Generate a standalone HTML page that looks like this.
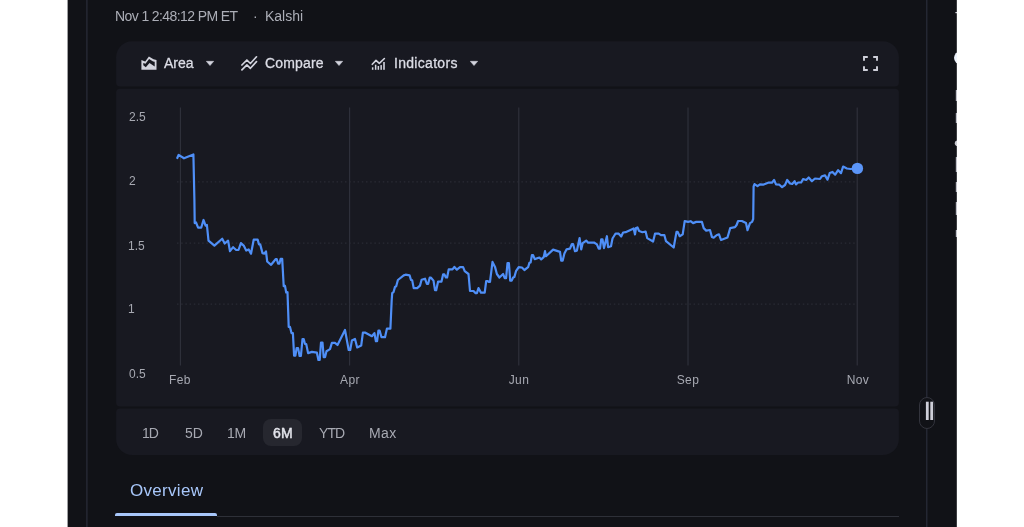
<!DOCTYPE html>
<html><head><meta charset="utf-8">
<style>
html,body{margin:0;padding:0;}
body{width:1024px;height:527px;overflow:hidden;background:#fff;position:relative;font-family:"Liberation Sans",sans-serif;}
.abs{position:absolute;}
.t{position:absolute;white-space:nowrap;line-height:1;will-change:transform;}
.hdr{font-size:14px;color:#acaeb7;top:9px;}
.tb{font-size:14px;color:#dcdde6;top:56px;-webkit-text-stroke:0.3px #dcdde6;}
.yl{font-size:12px;color:#a7a9b2;left:129px;}
.xl{font-size:12px;color:#a7a9b2;top:374px;transform:translateX(-50%);letter-spacing:0.4px;}
.rg{font-size:14px;color:#a7a9b2;top:425.5px;}
.ic{position:absolute;overflow:visible;}
</style></head><body>
<svg class="abs" style="left:0;top:0" width="1024" height="527" viewBox="0 0 1024 527">
<rect x="67.6" y="0" width="889.3" height="527" fill="#111217"/>
<line x1="86.9" y1="0" x2="86.9" y2="527" stroke="#2a2d3b" stroke-width="1.2"/>
<line x1="926.8" y1="0" x2="926.8" y2="527" stroke="#2a2d3b" stroke-width="1.2"/>
<path d="M132.1 41.2 H882.9 A16 16 0 0 1 898.9 57.2 V82.4 A4 4 0 0 1 894.9 86.4 H120.1 A4 4 0 0 1 116.1 82.4 V57.2 A16 16 0 0 1 132.1 41.2 Z" fill="#181921"/>
<path d="M120.1 88.8 H894.9 A4 4 0 0 1 898.9 92.8 V402.5 A4 4 0 0 1 894.9 406.5 H120.1 A4 4 0 0 1 116.1 402.5 V92.8 A4 4 0 0 1 120.1 88.8 Z" fill="#181921"/>
<path d="M120.1 408.6 H894.9 A4 4 0 0 1 898.9 412.6 V439 A16 16 0 0 1 882.9 455 H132.1 A16 16 0 0 1 116.1 439 V412.6 A4 4 0 0 1 120.1 408.6 Z" fill="#181921"/>
<circle cx="960.6" cy="57.8" r="6.6" fill="#eef3fc"/>
<rect x="955.4" y="12" width="1.6" height="1.2" fill="#d8d9e0"/>
<rect x="955.8" y="90" width="1.2" height="11" fill="#b9bac3"/>
<rect x="955.8" y="113" width="1.2" height="10" fill="#b9bac3"/>
<rect x="955.8" y="157" width="1.2" height="15" fill="#b9bac3"/>
<rect x="955.8" y="182" width="1.2" height="10" fill="#b9bac3"/>
<rect x="955.8" y="202" width="1.2" height="13" fill="#b9bac3"/>
<rect x="955.8" y="230" width="1.2" height="7" fill="#b9bac3"/>
<circle cx="957.6" cy="143.2" r="2.8" fill="#c9cad2"/>
<rect x="956.9" y="0" width="70" height="527" fill="#ffffff"/>
</svg>
<div class="t hdr" id="h1" style="left:115.1px;letter-spacing:-0.6px">Nov 1 2:48:12 PM ET</div>
<div class="t hdr" id="h2" style="left:253.4px">·</div>
<div class="t hdr" id="h3" style="left:265px">Kalshi</div>

<!-- Area icon -->
<svg class="ic" style="left:140px;top:55px" width="18" height="18" viewBox="0 0 18 18">
<path fill-rule="evenodd" fill="#d3d4de" d="M1.4 14.8 V5.0 L5.2 6.5 L8.9 1.4 L13.5 4.2 L16.5 5.0 V14.8 Z M3.3 7.9 L5.5 8.7 L9.1 4.1 L13.1 6.4 L14.7 6.7 V11.6 L9.5 7.9 L5.8 12.2 L3.3 10.2 Z"/>
</svg>
<!-- Compare icon -->
<svg class="ic" style="left:240px;top:55px" width="18" height="18" viewBox="0 0 18 18">
<path d="M1.9 10.0 L6.9 5.0 L10.4 8.5 L16.5 1.8" fill="none" stroke="#d3d4de" stroke-width="1.7" stroke-linejoin="round" stroke-linecap="round"/>
<path d="M1.9 14.8 L6.9 9.8 L10.4 13.3 L16.5 6.6" fill="none" stroke="#d3d4de" stroke-width="1.7" stroke-linejoin="round" stroke-linecap="round"/>
</svg>
<!-- Indicators icon -->
<svg class="ic" style="left:370px;top:55px" width="18" height="18" viewBox="0 0 18 18">
<path d="M2.3 9.3 L6.0 5.4 L9.3 8.4 L14.4 3.5" fill="none" stroke="#d3d4de" stroke-width="1.6" stroke-linejoin="round" stroke-linecap="round"/>
<rect x="1.9" y="12.3" width="1.5" height="2.5" fill="#d3d4de"/>
<rect x="4.9" y="9.7" width="1.5" height="5.1" fill="#d3d4de"/>
<rect x="7.6" y="11.0" width="1.5" height="3.8" fill="#d3d4de"/>
<rect x="10.4" y="10.1" width="1.5" height="4.7" fill="#d3d4de"/>
<rect x="13.2" y="7.0" width="1.6" height="7.8" fill="#d3d4de"/>
</svg>
<!-- dropdown arrows -->
<svg class="ic" style="left:206px;top:61px" width="8" height="5" viewBox="0 0 8 5"><path d="M0.3 0.3 H7.7 L4 4.6 Z" fill="#d3d4de" stroke="#d3d4de" stroke-width="0.5" stroke-linejoin="round"/></svg>
<svg class="ic" style="left:335px;top:61px" width="8" height="5" viewBox="0 0 8 5"><path d="M0.3 0.3 H7.7 L4 4.6 Z" fill="#d3d4de" stroke="#d3d4de" stroke-width="0.5" stroke-linejoin="round"/></svg>
<svg class="ic" style="left:470px;top:61px" width="8" height="5" viewBox="0 0 8 5"><path d="M0.3 0.3 H7.7 L4 4.6 Z" fill="#d3d4de" stroke="#d3d4de" stroke-width="0.5" stroke-linejoin="round"/></svg>
<!-- fullscreen icon -->
<svg class="ic" style="left:863px;top:56px" width="15" height="15" viewBox="0 0 15 15">
<path d="M1 4.8 V1 H4.8 M10.2 1 H14 V4.8 M14 10.2 V14 H10.2 M4.8 14 H1 V10.2" fill="none" stroke="#cfd0da" stroke-width="1.9"/>
</svg>

<div class="t tb" id="t1" style="left:164px">Area</div>
<div class="t tb" id="t2" style="left:264.5px;letter-spacing:0.15px">Compare</div>
<div class="t tb" id="t3" style="left:393.5px;letter-spacing:0.3px">Indicators</div>
<div class="t yl" style="top:111px">2.5</div>
<div class="t yl" style="top:175px">2</div>
<div class="t yl" style="top:239.5px;left:127.6px">1.5</div>
<div class="t yl" style="top:303.3px;left:127.6px">1</div>
<div class="t yl" style="top:368px">0.5</div>
<div class="t xl" style="left:180.2px">Feb</div>
<div class="t xl" style="left:349.7px">Apr</div>
<div class="t xl" style="left:519.3px">Jun</div>
<div class="t xl" style="left:688.4px">Sep</div>
<div class="t xl" style="left:858px">Nov</div>
<svg class="abs" style="left:0;top:0" width="1024" height="527" viewBox="0 0 1024 527">
<line x1="180.4" y1="107.5" x2="180.4" y2="365.5" stroke="#30323d" stroke-width="1.1"/>
<line x1="349.6" y1="107.5" x2="349.6" y2="365.5" stroke="#30323d" stroke-width="1.1"/>
<line x1="518.8" y1="107.5" x2="518.8" y2="365.5" stroke="#30323d" stroke-width="1.1"/>
<line x1="688.0" y1="107.5" x2="688.0" y2="365.5" stroke="#30323d" stroke-width="1.1"/>
<line x1="857.2" y1="107.5" x2="857.2" y2="365.5" stroke="#30323d" stroke-width="1.1"/>
<line x1="177" y1="181.9" x2="857" y2="181.9" stroke="#2e3039" stroke-width="1" stroke-dasharray="1.5 2.7"/>
<line x1="177" y1="243.1" x2="857" y2="243.1" stroke="#2e3039" stroke-width="1" stroke-dasharray="1.5 2.7"/>
<line x1="177" y1="304.1" x2="857" y2="304.1" stroke="#2e3039" stroke-width="1" stroke-dasharray="1.5 2.7"/>
<polyline points="177.3,158.0 178.6,154.9 184.0,158.3 193.4,154.5 194.4,200 194.7,223.1 196.0,222.5 198.1,227.7 201.2,227.7 203.5,220.0 205.6,225.6 206.9,225.0 208.5,240.6 214.4,245.6 222.2,238.7 224.7,243.5 228.1,240.6 230.0,251.2 233.1,247.2 236.2,250.0 238.5,250.0 240.9,243.1 243.7,245.6 246.2,250.6 248.7,249.4 251.0,253.7 253.7,239.7 257.7,239.7 259.0,244.4 260.2,244.4 262.5,253.1 264.4,253.7 266.0,251.5 267.2,261.5 271.1,264.8 275.6,259.2 276.8,259.2 278.1,263.7 279.4,263.7 280.6,258.9 282.2,258.9 283.7,286.2 285.0,285.9 286.2,292.5 287.5,292.2 288.2,312 288.7,326.9 290.0,326.9 291.5,333.1 292.9,333.1 294.1,355.6 295.4,355.6 296.6,348.1 298.1,348.1 299.6,356.0 300.9,356.0 302.5,339.0 303.7,339.0 305.0,344.0 306.2,344.0 308.1,353.1 311.9,351.9 316.9,352.7 318.4,360.0 319.7,360.0 321.0,342.5 322.5,342.5 323.7,357.2 325.0,357.2 326.5,351.2 330.0,349.1 331.9,342.9 335.0,342.9 337.5,345.0 345.0,330.0 348.7,350.0 350.2,350.0 351.9,340.6 355.0,339.0 357.2,347.5 361.2,345.6 362.9,332.7 365.0,332.5 371.9,336.2 374.4,333.1 375.9,341.2 377.1,341.2 378.4,330.6 379.6,330.6 381.5,337.2 385.0,337.2 386.9,328.7 390.4,328.7 391.7,300 392.2,293.1 393.5,292.2 395.0,286.9 396.2,286.2 397.9,280.0 403.7,275.4 405.6,274.7 409.6,275.4 411.0,280.0 412.2,280.4 413.7,288.1 417.2,288.1 420.0,285.6 421.6,279.7 425.0,278.7 426.9,284.0 428.1,284.0 429.7,277.7 431.0,277.7 433.5,280.6 435.0,290.2 436.2,290.2 438.1,281.6 441.5,281.6 443.1,274.4 444.4,274.4 445.9,277.5 447.1,277.5 448.7,269.4 452.5,269.4 454.4,266.9 456.9,269.7 460.0,267.2 463.1,267.2 464.7,271.2 468.5,274.0 470.0,291.0 473.5,291.0 475.6,293.1 476.9,293.1 478.5,288.1 481.0,292.7 484.7,292.7 486.2,281.0 487.5,281.0 488.7,281.9 490.0,281.9 492.5,261.9 495.0,266.9 496.9,274.0 499.4,277.5 503.1,274.0 504.7,278.1 506.1,278.1 507.5,263.1 508.9,263.1 510.2,280.6 511.7,280.6 513.1,277.5 514.4,276.9 516.0,271.2 518.7,267.2 521.9,267.5 524.4,270.0 528.1,267.2 529.4,262.9 530.6,262.5 531.9,255.2 533.1,255.2 534.7,259.1 539.4,257.5 541.2,259.4 543.7,257.2 545.0,251.2 546.0,256.2 553.1,249.6 560.0,251.9 561.2,260.6 562.7,260.6 564.4,253.5 566.5,249.4 570.0,248.7 571.9,244.0 573.1,244.0 575.0,251.2 576.9,250.6 579.6,238.1 581.2,249.4 582.7,243.1 586.2,240.6 588.1,242.7 594.0,242.5 596.9,244.4 598.7,248.7 600.0,248.7 601.2,239.4 602.5,239.4 604.0,248.1 606.9,236.2 608.1,247.2 611.0,246.2 612.5,238.5 615.6,233.5 618.7,233.7 621.2,236.5 623.1,232.5 625.6,232.2 633.7,228.5 635.0,234.4 636.0,228.1 637.5,227.5 639.1,231.0 642.5,232.2 645.6,231.5 647.2,238.1 653.1,241.5 655.0,233.7 658.7,233.7 661.0,235.2 664.4,235.2 666.0,241.2 673.7,247.5 676.5,231.9 677.7,231.9 679.7,236.2 682.7,234.4 684.7,221.2 688.1,221.9 690.6,221.2 693.1,223.1 696.2,221.9 701.9,221.9 703.7,228.1 706.2,230.6 710.0,230.0 711.9,236.9 713.7,237.7 716.9,235.0 719.0,234.4 721.0,240.0 727.5,237.5 730.2,228.1 735.0,227.2 736.6,225.0 738.1,221.0 741.9,221.0 746.0,223.1 747.5,230.2 750.0,223.1 752.1,221.9 753.2,219 753.6,186.5 754.5,184.1 757.5,186.2 760.0,184.4 763.1,184.7 768.1,182.7 771.9,182.7 774.1,180.0 776.0,184.4 779.4,184.7 782.1,187.2 785.0,185.0 787.2,180.0 790.0,183.5 792.2,184.0 794.6,181.2 796.0,184.4 798.1,182.5 801.2,182.5 803.1,179.0 806.2,180.0 808.7,177.5 811.9,181.2 815.0,178.5 820.0,179.0 821.9,176.2 825.0,175.4 827.5,179.7 829.7,173.1 832.5,171.9 835.2,174.7 838.1,170.2 841.0,173.1 843.1,166.6 846.9,168.5 850.6,169.0 857.3,168.5" fill="none" stroke="#4f8ff7" stroke-width="2.2" stroke-linejoin="round" stroke-linecap="round"/>
<circle cx="857.4" cy="168.4" r="5.7" fill="#5b95f8"/>
</svg>
<div class="abs" style="left:263px;top:419px;width:39px;height:27px;border-radius:8px;background:#26272f;"></div>
<div class="t rg" style="left:142.3px;letter-spacing:-1px">1D</div>
<div class="t rg" style="left:184.5px">5D</div>
<div class="t rg" style="left:227.2px;letter-spacing:-0.3px">1M</div>
<div class="t rg" style="left:272.6px;color:#e4e5ec;-webkit-text-stroke:0.45px #e4e5ec;letter-spacing:0.2px">6M</div>
<div class="t rg" style="left:318.5px;letter-spacing:-0.9px">YTD</div>
<div class="t rg" style="left:369.3px;letter-spacing:0.4px">Max</div>
<div class="t" id="ov" style="left:129.5px;top:481.8px;font-size:17px;color:#a8c7fa;letter-spacing:0.3px">Overview</div>
<div class="abs" style="left:115px;top:513px;width:102px;height:3px;background:#a8c7fa;border-radius:2px 2px 0 0;"></div>
<div class="abs" style="left:217px;top:516px;width:682px;height:1px;background:#2e3038;"></div>
<!-- side handle -->
<div class="abs" style="left:919px;top:397px;width:14px;height:30px;border:1px solid #33343d;border-radius:8px;background:#111217;"></div>
<svg class="abs" style="left:920px;top:396px" width="20" height="34" viewBox="0 0 20 34"><rect x="5.9" y="5.7" width="2.8" height="18.3" fill="#cdced8"/><rect x="10.3" y="5.7" width="2.8" height="18.3" fill="#cdced8"/></svg>
</body></html>
